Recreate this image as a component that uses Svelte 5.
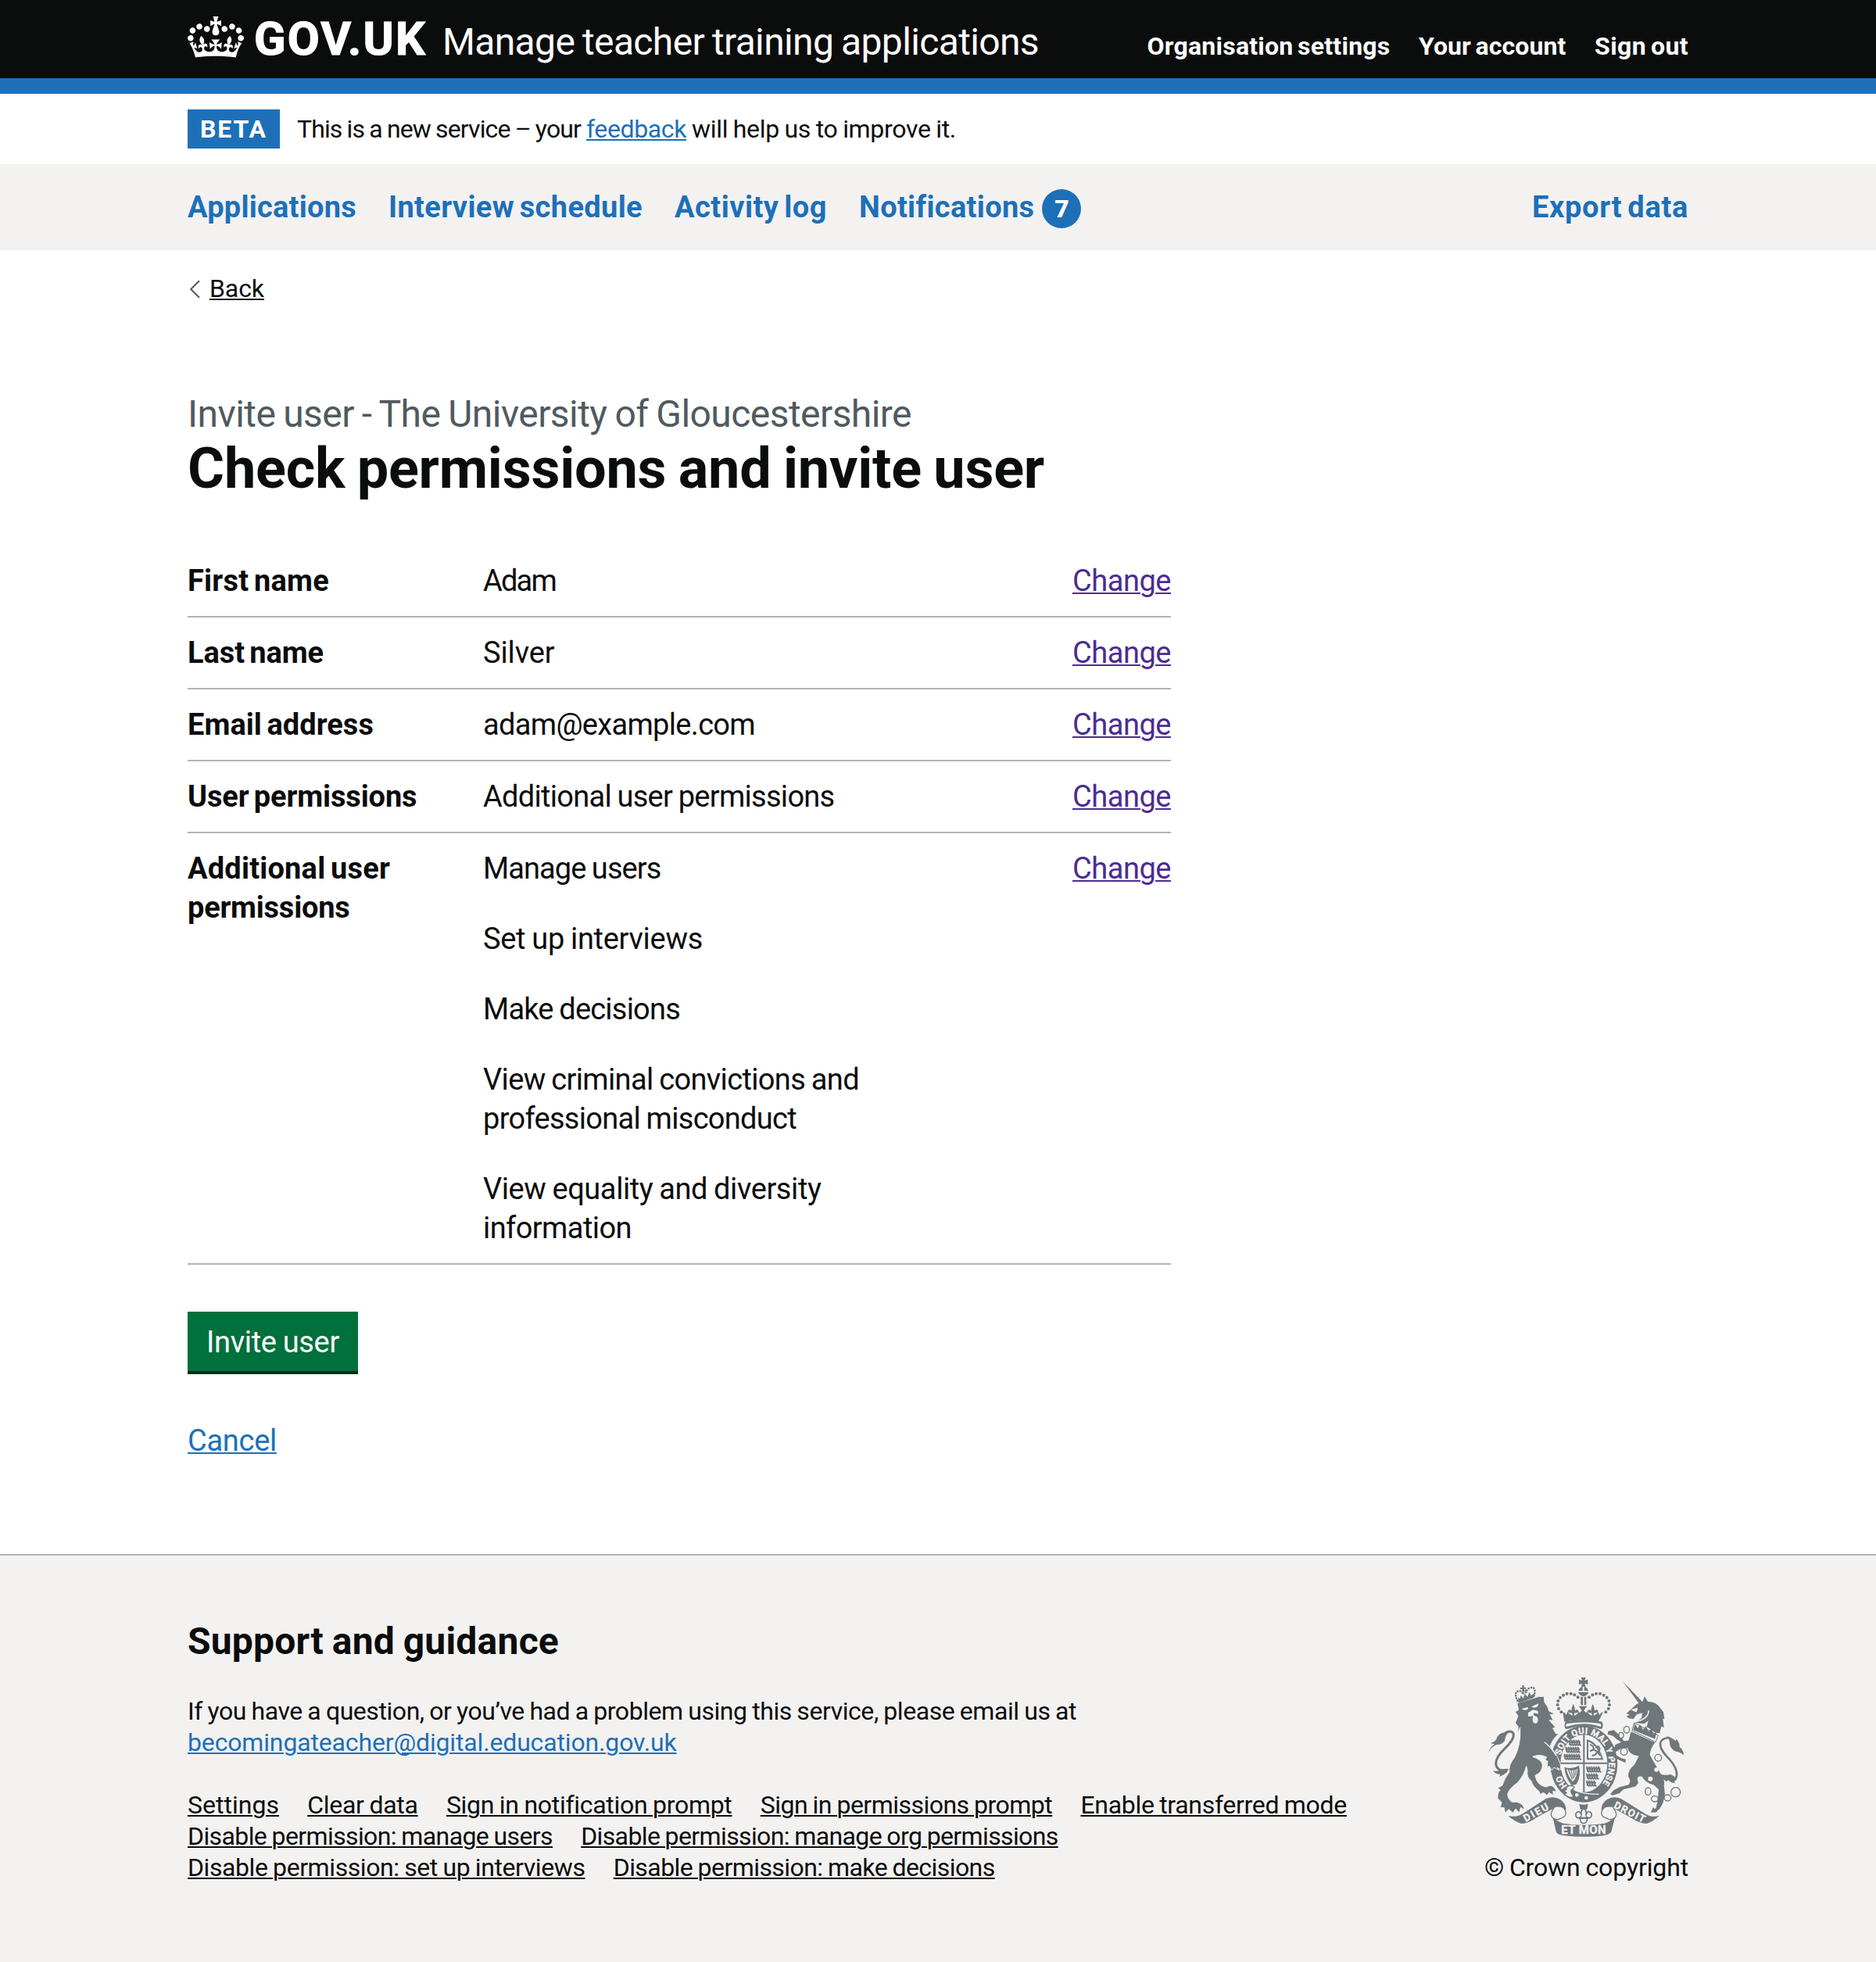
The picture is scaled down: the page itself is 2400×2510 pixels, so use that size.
<script>
  const headerLinks = [
    { text: 'Organisation settings', width: 311 },
    { text: 'Your account', width: 188.5 },
    { text: 'Sign out', width: 120 }
  ];

  const navLinks = [
    { text: 'Applications', width: 216 },
    { text: 'Interview schedule', width: 325 },
    { text: 'Activity log', width: 195 },
    { text: 'Notifications', width: 224, count: 7 }
  ];

  // Each value is a paragraph, held as its lines.
  const rows = [
    { key: [['First name', 181]], values: [[['Adam', 93]]] },
    { key: [['Last name', 174]], values: [[['Silver', 91.5]]] },
    { key: [['Email address', 238]], values: [[['adam@example.com', 348]]] },
    { key: [['User permissions', 293.5]], values: [[['Additional user permissions', 449.5]]] },
    {
      key: [['Additional user', 259], ['permissions', 207.5]],
      values: [
        [['Manage users', 227.5]],
        [['Set up interviews', 281]],
        [['Make decisions', 252]],
        [['View criminal convictions and', 481], ['professional misconduct', 401]],
        [['View equality and diversity', 432.5], ['information', 190]]
      ]
    }
  ];

  const footerLinks = [
    { text: 'Settings', width: 117 },
    { text: 'Clear data', width: 141.5 },
    { text: 'Sign in notification prompt', width: 364.5 },
    { text: 'Sign in permissions prompt', width: 373.5 },
    { text: 'Enable transferred mode', width: 340.5 },
    { text: 'Disable permission: manage users', width: 467 },
    { text: 'Disable permission: manage org permissions', width: 610.5 },
    { text: 'Disable permission: set up interviews', width: 508.5 },
    { text: 'Disable permission: make decisions', width: 488 }
  ];

  const crownPearls = [
    [322, 181], [312, 168], [308, 153], [310, 138], [318, 125], [330, 116], [344, 110], [359, 110], [373, 115], [386, 124]
  ];

  // Rows of heraldic lions on the shield: x, y and number of strokes.
  const shieldLions = [
    [352, 296, 5], [340, 323, 6], [334, 350, 7], [420, 398, 6], [420, 425, 5], [420, 452, 4]
  ];

  // Tracks a run of text so that its advance equals the given width.
  function fit(node, width) {
    const natural = node.getBoundingClientRect().width;
    node.style.letterSpacing = `${(width - natural) / node.textContent.length}px`;
  }
</script>

<header class="header">
  <div class="container header-row">
    <a class="logo" href="#home">
      <svg class="crown" viewBox="0 0 132 97" width="72" height="53" aria-hidden="true">
        <path fill="currentColor" fill-rule="evenodd" d="M25 30.2c3.5 1.5 7.7-.2 9.1-3.7 1.5-3.6-.2-7.8-3.9-9.2-3.6-1.4-7.6.3-9.1 3.9-1.4 3.5.3 7.5 3.9 9zM9 39.5c3.6 1.5 7.8-.2 9.2-3.7 1.5-3.6-.2-7.8-3.9-9.1-3.6-1.5-7.6.2-9.1 3.8-1.4 3.5.3 7.5 3.8 9zM4.4 57.2c3.5 1.5 7.7-.2 9.1-3.8 1.5-3.6-.2-7.7-3.9-9.1-3.5-1.5-7.6.3-9.1 3.8-1.4 3.5.3 7.6 3.9 9.1zm38.3-21.4c3.5 1.5 7.7-.2 9.1-3.8 1.5-3.6-.2-7.7-3.9-9.1-3.6-1.5-7.6.3-9.1 3.8-1.3 3.6.4 7.7 3.9 9.1zm64.4-5.6c-3.6 1.5-7.8-.2-9.1-3.7-1.5-3.6.2-7.8 3.8-9.2 3.6-1.4 7.7.3 9.2 3.9 1.3 3.5-.4 7.5-3.9 9zm15.9 9.3c-3.6 1.5-7.7-.2-9.1-3.7-1.5-3.6.2-7.8 3.7-9.1 3.6-1.5 7.7.2 9.2 3.8 1.5 3.5-.3 7.5-3.8 9zm4.7 17.7c-3.6 1.5-7.8-.2-9.2-3.8-1.5-3.6.2-7.7 3.9-9.1 3.6-1.5 7.7.3 9.2 3.8 1.3 3.5-.4 7.6-3.9 9.1zM89.3 35.8c-3.6 1.5-7.8-.2-9.2-3.8-1.4-3.6.2-7.7 3.9-9.1 3.6-1.5 7.7.3 9.2 3.8 1.4 3.6-.3 7.7-3.9 9.1zM69.7 17.7l8.9 4.7V9.3l-8.9 2.8c-.2-.3-.5-.6-.9-.9L72.4 0H59.6l3.5 11.2c-.3.3-.6.5-.9.9l-8.8-2.8v13.1l8.8-4.7c.3.3.6.7.9.9l-5 15.4v.1c-.2.8-.4 1.6-.4 2.4 0 4.1 3.1 7.5 7 8.1h.2c.3 0 .7.1 1 .1.4 0 .7 0 1-.1h.2c4-.6 7.1-4.1 7.1-8.1 0-.8-.1-1.7-.4-2.4V34l-5.1-15.4c.4-.2.7-.6 1-.9zM66 92.8c16.9 0 32.8 1.1 47.1 3.2 4-16.9 8.9-26.7 14-33.5l-9.6-3.4c1 4.9 1.1 7.2 0 10.2-1.5-1.4-3-4.3-4.2-8.7L108.6 76c2.8-2 5-3.2 7.5-3.3-4.4 9.4-10 11.9-13.6 11.2-4.3-.8-6.3-4.6-5.6-7.9 1-4.7 5.7-5.9 8-.5 4.3-8.7-3-11.4-7.6-8.8 7.1-7.2 7.9-13.5 2.1-21.1-8 6.1-8.1 12.3-4.5 20.8-4.7-5.4-12.1-2.5-9.5 6.2 3.4-5.2 7.9-2 7.2 3.1-.6 4.3-6.4 7.8-13.5 7.2-10.3-.9-10.9-8-11.2-13.8 2.5-.5 7.1 1.8 11 7.3L80.2 60c-4.1 4.4-8 5.3-12.3 5.4 1.4-4.4 8-11.6 8-11.6H55.5s6.4 7.2 7.9 11.6c-4.2-.1-8-1-12.3-5.4l1.4 16.4c3.9-5.5 8.5-7.7 10.9-7.3-.3 5.8-.9 12.8-11.1 13.8-7.2.6-12.9-2.9-13.5-7.2-.7-5 3.8-8.3 7.1-3.1 2.7-8.7-4.6-11.6-9.4-6.2 3.7-8.5 3.6-14.7-4.6-20.8-5.8 7.6-5 13.9 2.2 21.1-4.7-2.6-11.9.1-7.7 8.8 2.3-5.5 7.1-4.2 8.1.5.7 3.3-1.3 7.1-5.7 7.9-3.5.7-9-1.8-13.5-11.2 2.5.1 4.7 1.3 7.5 3.3l-4.7-15.4c-1.2 4.4-2.7 7.2-4.3 8.7-1.1-3-.9-5.3 0-10.2l-9.5 3.4c5 6.9 9.9 16.7 14 33.5 14.8-2.1 30.8-3.2 47.7-3.2z" />
      </svg>
      <span class="logotype" use:fit={221}>GOV.UK</span>
    </a>
    <a class="service" href="#service"><span use:fit={763}>Manage teacher training applications</span></a>
    <nav class="header-nav">
      {#each headerLinks as link}
        <a href="#account"><span use:fit={link.width}>{link.text}</span></a>
      {/each}
    </nav>
  </div>
</header>

<div class="container phase">
  <strong class="tag"><span use:fit={86}>BETA</span></strong>
  <p>
    <span use:fit={363}>This is a new service – your</span>
    <a class="link" href="#feedback"><span use:fit={128}>feedback</span></a>
    <span use:fit={338}>will help us to improve it.</span>
  </p>
</div>

<nav class="primary">
  <div class="container primary-row">
    {#each navLinks as link}
      <a href="#nav">
        <span use:fit={link.width}>{link.text}</span>
        {#if link.count}<b class="badge">{link.count}</b>{/if}
      </a>
    {/each}
    <a class="export" href="#export"><span use:fit={200}>Export data</span></a>
  </div>
</nav>

<main class="container main">
  <a class="back" href="#back">
    <svg viewBox="0 0 14 24" width="14" height="24" aria-hidden="true">
      <path d="M13 1.2 2.2 12 13 22.8" fill="none" stroke="#505a5f" stroke-width="2" />
    </svg>
    <span use:fit={70}>Back</span>
  </a>

  <h1>
    <span class="caption"><span use:fit={926}>Invite user - The University of Gloucestershire</span></span>
    <span class="title"><span use:fit={1096}>Check permissions and invite user</span></span>
  </h1>

  <dl>
    {#each rows as row}
      <div class="row">
        <dt>
          {#each row.key as [line, width]}
            <span class="line"><span use:fit={width}>{line}</span></span>
          {/each}
        </dt>
        <dd class="value">
          {#each row.values as lines}
            <p>
              {#each lines as [line, width]}
                <span class="line"><span use:fit={width}>{line}</span></span>
              {/each}
            </p>
          {/each}
        </dd>
        <dd class="action"><a class="change" href="#change"><span use:fit={126}>Change</span></a></dd>
      </div>
    {/each}
  </dl>

  <button type="button"><span use:fit={170}>Invite user</span></button>

  <p class="cancel"><a class="link" href="#cancel"><span use:fit={114}>Cancel</span></a></p>
</main>

<footer>
  <div class="container footer-row">
    <div class="support">
      <h2><span use:fit={475}>Support and guidance</span></h2>
      <p class="contact">
        <span use:fit={1137}>If you have a question, or you’ve had a problem using this service, please email us at</span><br />
        <a class="link" href="#email"><span use:fit={625.5}>becomingateacher@digital.education.gov.uk</span></a>
      </p>
      <ul>
        {#each footerLinks as link}
          <li><a href="#footer"><span use:fit={link.width}>{link.text}</span></a></li>
        {/each}
      </ul>
    </div>

    <div class="crest">
      <svg viewBox="42 48 750 612" width="250" height="204" aria-hidden="true">
        <g fill="#6f777b">
          <!-- imperial crown -->
          <path d="M398 48h18l-4 12 12-4v19l-12-4 4 12h-18l4-12-12 4v-19l12 4z" />
          <path d="M388 99q4-14 16-16v16zM426 99q-4-14-16-16v16zM387 104h40q-4 13-20 17-16-4-20-17z" />
          <path d="M397 122h8v32h-8zM410 122h8v32h-8z" />
          {#each crownPearls as [x, y]}
            <circle cx={x} cy={y} r="6" />
            <circle cx={815 - x} cy={y} r="6" />
          {/each}
          <path d="M328 180q8 2 14 12l4-14q8 14 20 16l-3-10q-12 3-16-8 8-8 14 0 1-15 7-26 7 11 7 26 6-8 14 0-4 11-16 8l-2 10q14-2 18-16l4 6 8-10-12-16h32l-12 16 8 10 4-6q6 14 20 16l-3-10q-12 3-16-8 8-8 14 0 1-15 7-26 7 11 7 26 6-8 14 0-4 11-16 8l-2 10q14-4 18-16l4 14q6-10 15-12l-19 38q-67-13-130 0z" />
          <path d="M340 217q67-12 136 0 12 10 2 28h-8q-62-22-124 0h-8q-8-18 2-28zm4 8q-8 6-2 12 66-22 131 0 6-6-2-12-62-10-127 0z" fill-rule="evenodd" />

          <!-- garter and shield -->
          <ellipse cx="409" cy="380" rx="129" ry="147" />
          <ellipse cx="409" cy="378" rx="90" ry="110" fill="#f3f2f1" />
          <path d="M318 374h182v6H318zM406 266h6v224h-6z" />
          <path d="M420 286q40 6 64 78h-64zm6 8v64h50q-16-50-50-64z" fill-rule="evenodd" />
          <g fill="none" stroke="#6f777b" stroke-width="6" stroke-linecap="round" stroke-linejoin="round">
            {#each shieldLions as [x, y, n]}
              {#each Array(n) as _, i}
                <path d="M{x + i * 9} {y - 6}l5 6-3 8 6 4" />
              {/each}
              <path d="M{x} {y}h{n * 8}" />
            {/each}
            <path d="M434 306l10 6 4 14 12 6 10 14M448 324l-14 6M460 332l-6 12-12 4M456 316l8-4 6 10-4 10" />
          </g>
          <path d="M334 392q30 10 56-6 10 40-10 72l-18 4q-24-28-28-70zm8 8q6 28 24 48 18-20 18-50-20 12-42 2z" fill-rule="evenodd" />
          <path d="M350 402l14 38M360 404l8 32M370 402l2 30M379 398l-2 26" stroke="#6f777b" stroke-width="3.5" />
          <path id="motto" d="M320 347A94 114 0 1 1 474 462" fill="none" />
          <path id="motto-start" d="M354 472A94 114 0 0 1 315 380" fill="none" />
          <text class="motto" textLength="378"><textPath href="#motto">SOIT QUI MAL Y PENSE</textPath></text>
          <text class="motto"><textPath href="#motto-start" startOffset="12">HO</textPath></text>
          <path d="M370 478q30 18 96 18" stroke="#f3f2f1" stroke-width="4" fill="none" />
          <circle cx="382" cy="499" r="7" fill="#f3f2f1" />
          <circle cx="418" cy="510" r="7" fill="#f3f2f1" />
          <path d="M352 464q14-4 20 6l-8 8q-10 4 0 18l6 10q-16 6-28-4l-8-4 8-8-10-8 10-4q-2-12 10-14z" fill="#f3f2f1" stroke="#6f777b" stroke-width="4" />

          <!-- lion -->
          <path d="M114 404Q74 410 71 378 72 352 104 322 141 288 139 266 134 248 108 260" fill="none" stroke="#6f777b" stroke-width="9" />
          <path d="M42 338Q46 318 66 304L50 300Q72 296 76 276 86 258 124 256 106 270 106 288 98 306 74 306 54 312 42 338zM60 405q12 6 26-2 16-6 34-4l-8 14q-12 10-28 16l4-10q-18 2-28-14z" />
          <path stroke="#f3f2f1" stroke-width="3" d="M152 148 164 143 236 121 256 121 258 143Q272 160 276 178L298 187 280 191 292 213 276 212 300 239 290 243 302 264 313 264Q288 284 280 312L304 346 318 378 321 402 306 394 314 404 294 393 286 404 275 387 267 395 270 370 260 363 266 354Q240 340 212 352 248 364 250 384 250 412 222 424 228 462 262 468L282 462Q300 470 303 487L290 484 292 500 275 490 268 501 254 490 240 497 238 486Q212 466 206 444 188 432 192 404L188 388Q180 424 154 452 122 474 116 496 118 518 134 526L152 526Q180 534 180 556L166 547 162 567 147 553 136 568 121 554 106 568 103 548 88 547 93 527 78 512Q76 490 88 480L78 472 96 462Q102 438 122 412 120 382 142 356 168 306 164 240L156 262 156 236 145 222 156 196 145 180 158 172z" />
          <path d="M156 140q-12-20-8-32 6-10 16-8 10 4 12 12 2-16 4-16 8 0 6 12 4-16 16-20 16-4 18 8 2 14-4 28" fill="none" stroke="#6f777b" stroke-width="7" stroke-dasharray="7 3" />
          <path d="M156 126l8 4 2-14 10 12 6-18 10 12 8-18 6 14 12-10-2 18-58 20zM172 78h7v8h8v6h-8v10h-7v-9h-8v-6h8z" />
          <path d="M170 168l24-6q4 4-4 10-12 4-20-4zM208 160l26-12q2 10-8 14-8 4-18-2zM194 184l20-12 18 4 2 12-16-4-4 8 16 8q8 16-4 24-14 2-14-16l2-12-18 2z" fill="#f3f2f1" />
          <path d="M258 296q30 24 44 52" stroke="#f3f2f1" stroke-width="4" fill="none" />

          <!-- unicorn -->
          <path d="M745 448Q770 440 764 408 758 382 726 350 700 322 702 300 708 278 740 280" fill="none" stroke="#6f777b" stroke-width="8" />
          <path d="M724 274Q748 278 760 292L764 284Q778 300 776 314 792 326 792 346 780 334 762 332 738 322 738 298 738 284 724 274zM700 418q18 8 40 2 16 4 26 22l-12-2 4 14q-16-2-26-12l-6 6q-16-10-26-30z" />
          <path d="M558 63 632 140 622 150z" />
          <path d="M572 186 612 150 634 140 642 121 654 140Q690 142 702 166L714 180 718 208 712 206 716 240 706 236 700 262Q680 262 664 246L650 238 656 214 640 226 606 222 630 204 634 184 612 190 598 208 580 204 572 196 586 192z" />
          <path d="M592 172l22-6-4 14zM610 218q50-10 48-44-2 30-48 44z" fill="#f3f2f1" stroke="#f3f2f1" stroke-width="3" />
          <path d="M602 222 694 270 684 296 594 252z" fill="#f3f2f1" stroke="#6f777b" stroke-width="3" />
          <path d="M598 250l6-24 12 16 8-14 12 20 12-14 8 22 14-14 4 22 14-8-6 28z" />
          <path d="M590 256 682 298Q664 320 662 346L684 384 700 412Q722 440 716 462L720 498 712 530 700 552 680 568 672 560 686 548 692 520 696 478 676 460Q644 452 632 428 606 424 618 452L608 466 560 478 546 492 520 500 510 496 524 480 548 468 580 460Q592 446 580 430 576 404 602 384L620 350Q582 346 576 318 540 318 526 342L552 358 570 362 568 376 548 366 524 356 516 338 530 306 552 296 536 286 520 272 500 266 502 254 524 250 544 268 562 292 580 290z" />
          <path d="M665 566l10-20 16 18z" />
          <g fill="#f3f2f1" stroke="#6f777b" stroke-width="4">
            <ellipse cx="573" cy="248" rx="11" ry="13" /><ellipse cx="552" cy="270" rx="9" ry="11" />
            <ellipse cx="563" cy="332" rx="13" ry="14" /><ellipse cx="694" cy="356" rx="13" ry="13" />
            <ellipse cx="655" cy="485" rx="11" ry="14" /><ellipse cx="681" cy="514" rx="13" ry="11" />
            <ellipse cx="730" cy="510" rx="13" ry="12" /><circle cx="761" cy="488" r="18" />
          </g>
          <circle cx="687" cy="402" r="8" fill="#f3f2f1" /><circle cx="664" cy="437" r="9" fill="#f3f2f1" />

          <!-- ribbons -->
          <path d="M118 579Q150 586 172 572L262 514Q292 500 318 516 342 534 340 556 322 572 318 560 306 548 290 552 262 566 220 590 196 608 168 609 142 600 118 579zM698 579Q666 586 646 572L552 514Q524 500 498 516 474 534 476 556 494 572 498 560 510 548 526 552 554 566 596 590 622 608 650 609 676 600 698 579z" />
          <path d="M292 552q-16 20-4 34 14 10 24 6l22-10q8-8 4-22-8-22-42-16zM524 552q16 20 4 34-14 10-24 6l-22-10q-8-8-4-22 8-22 42-16z" fill="#f3f2f1" stroke="#6f777b" stroke-width="4" />
          <path d="M290 586Q312 604 330 608 408 620 488 608 506 604 528 586L514 640Q510 650 484 655 408 664 334 655 306 652 302 640z" />
          <text class="ribbon" x="408" y="649" text-anchor="middle" textLength="172">ET MON</text>
          <text class="ribbon small" transform="translate(186 603) rotate(-29)" textLength="104">DIEU</text>
          <text class="ribbon small" transform="translate(521 547) rotate(27)" textLength="130">DROIT</text>
          <path d="M391 534q17 4 34 0l-4 20h-26z" />
          <path d="M408 548q14 14 8 30 4-18 16-14 12 8 2 22-8 4-14-2l2 8q-4 16-14 16t-14-16l2-8q-6 6-14 2-10-14 2-22 12-4 16 14-6-16 8-30z" fill="#f3f2f1" stroke="#6f777b" stroke-width="5" />
          <path d="M390 584h36v7h-36z" />
        </g>
      </svg>
      <p><span use:fit={261}>© Crown copyright</span></p>
    </div>
  </div>
</footer>

<style>
  :global(body) {
    background: #fff;
    color: #0b0c0c;
    font: 400 38px/50px Roboto, 'Liberation Sans', sans-serif;
  }
  p, h1, h2, dl, dd, ul { margin: 0; padding: 0; }
  span { white-space: nowrap; word-spacing: -0.03em; }
  dt span, .primary span, .header-nav span { word-spacing: -0.08em; }
  a {
    color: inherit;
    text-decoration-thickness: 2px;
    text-underline-offset: 2px;
  }
  .link { color: #1d70b8; }
  .container { width: 1920px; margin: 0 auto; }

  .header { background: #0b0c0c; color: #fff; border-bottom: 20px solid #1d70b8; }
  .header a { text-decoration: none; }
  .header-row { display: flex; align-items: baseline; box-sizing: border-box; height: 100px; padding-top: 20px; }
  .logo { display: flex; align-items: baseline; gap: 13px; line-height: 60px; }
  .crown { align-self: flex-start; margin-top: 1px; }
  .logotype { font-size: 59.5px; font-weight: 700; -webkit-text-stroke: 1.2px currentColor; }
  .service { margin-left: 20px; font-size: 48px; line-height: 60px; }
  .header-nav { display: flex; gap: 36.5px; margin-left: auto; font-size: 32px; font-weight: 700; line-height: 40px; }

  .phase { display: flex; align-items: center; gap: 22px; padding: 20px 0; font-size: 32px; }
  .phase p { word-spacing: -0.03em; }
  .tag { box-sizing: border-box; width: 118px; padding-left: 16px; background: #1d70b8; color: #fff; }

  .primary { background: #f3f2f1; color: #1d70b8; font-weight: 700; }
  .primary-row { display: flex; align-items: center; gap: 41px; height: 110px; }
  .primary a { display: flex; align-items: center; gap: 10px; text-decoration: none; }
  .badge { width: 50px; height: 50px; margin: 4px 0 0; border-radius: 50%; background: #1d70b8; color: #fff; font-size: 32px; text-align: center; }
  .primary .export { margin-left: auto; }

  .main { padding: 29px 0 120px; }
  .back { display: flex; align-items: center; gap: 12px; padding-left: 2px; font-size: 32px; line-height: 40px; text-decoration: none; }
  .back svg { margin-top: 2px; }
  .back span { text-decoration: underline 2px; text-underline-offset: 2px; }
  h1 { margin-top: 111px; }
  .caption, .title, .line { display: block; }
  .caption { color: #505a5f; font-size: 48px; font-weight: 400; line-height: 60px; }
  .title { font-size: 72px; font-weight: 700; line-height: 80px; }

  dl { width: 1258px; margin: 58px 0 60px; }
  .row { display: grid; grid-template-columns: 378px 1fr auto; padding: 20px 0; border-bottom: 2px solid #b1b4b6; }
  dt { font-weight: 700; }
  .value { display: grid; gap: 40px; }
  .change { color: #4c2c92; }

  button { display: block; padding: 14px 24px 12px; border: 0; background: #00703c; box-shadow: 0 4px 0 #002d18; color: #fff; font: inherit; }
  .cancel { margin-top: 64px; }

  footer { min-height: 440px; padding-top: 80px; border-top: 2px solid #b1b4b6; background: #f3f2f1; font-size: 32px; line-height: 40px; }
  .footer-row { display: flex; align-items: flex-end; justify-content: space-between; }
  .support { width: 1500px; }
  h2 { font-size: 48px; line-height: 60px; }
  .contact { margin: 39px 0 40px; }
  ul { display: flex; flex-wrap: wrap; column-gap: 36.2px; list-style: none; }
  .crest { display: flex; flex-direction: column; align-items: flex-end; gap: 19px; }
  .crest svg { margin-right: 6px; }
  .motto { fill: #f3f2f1; stroke: #f3f2f1; font-size: 34px; font-weight: 700; }
  .ribbon { fill: #f3f2f1; stroke: #f3f2f1; font-size: 45px; font-weight: 700; }
  .small { font-size: 39px; }
</style>
